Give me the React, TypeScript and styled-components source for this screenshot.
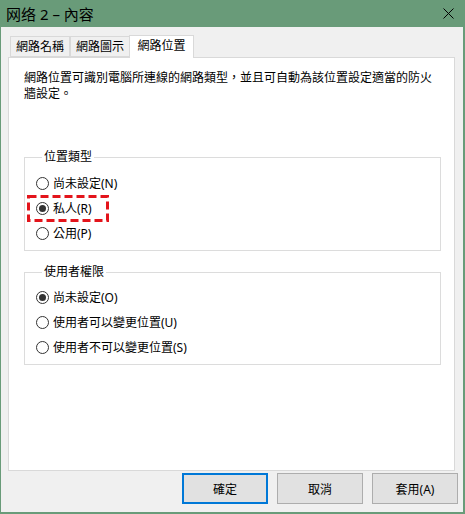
import React from "react";
import styled, { createGlobalStyle } from "styled-components";

const GREEN = "#699b79";

const GlobalStyle = createGlobalStyle`
  html, body {
    margin: 0;
    padding: 0;
    background: #ffffff;
  }
  body {
    font-family: "Noto Sans", "Noto Sans CJK TC", sans-serif;
    font-size: 12px;
    color: #000;
  }
  * {
    box-sizing: border-box;
  }
`;

const Window = styled.div`
  width: 465px;
  height: 514px;
  display: flex;
  flex-direction: column;
  border-left: 1px solid ${GREEN};
  border-right: 2px solid ${GREEN};
  border-bottom: 2px solid ${GREEN};
  background: #f0f0f0;
`;

const TitleBar = styled.div`
  height: 27px;
  flex: none;
  margin-left: -1px;
  margin-right: -2px;
  background: ${GREEN};
  display: flex;
  align-items: center;
  justify-content: space-between;
  padding: 0 11px 0 6px;
`;

const TitleText = styled.span`
  font-family: "Noto Sans", "Noto Sans CJK SC", sans-serif;
  font-size: 15px;
  line-height: 20px;
  color: #000;
`;

const Body = styled.div`
  flex: 1;
  display: flex;
  flex-direction: column;
  padding: 8px 8px 0 7px;
`;

const TabStrip = styled.div`
  display: flex;
  align-items: flex-end;
  height: 22px;
  padding-left: 2px;
  position: relative;
  z-index: 1;
`;

const Tab = styled.div<{ $active?: boolean; $width: number }>`
  width: ${(p) => p.$width}px;
  height: ${(p) => (p.$active ? 23 : 21)}px;
  margin-left: ${(p) => (p.$active ? -1 : 0)}px;
  margin-bottom: ${(p) => (p.$active ? -1 : 0)}px;
  background: ${(p) => (p.$active ? "#ffffff" : "#f0f0f0")};
  border: 1px solid #d9d9d9;
  border-bottom: ${(p) => (p.$active ? "none" : "1px solid #d9d9d9")};
  & + & {
    border-left: ${(p) => (p.$active ? "1px solid #d9d9d9" : "none")};
  }
  display: flex;
  align-items: center;
  justify-content: center;
  padding-bottom: ${(p) => (p.$active ? 3 : 0)}px;
  font-size: 12px;
  line-height: 16px;
`;

const Page = styled.div`
  height: 414px;
  flex: none;
  background: #ffffff;
  border: 1px solid #d9d9d9;
  padding: 12px 15px 0 15px;
`;

const Description = styled.p`
  margin: 0;
  width: 416px;
  line-height: 16px;
  font-size: 12px;
`;

const Group = styled.fieldset<{ $gap: number; $top: number }>`
  margin: ${(p) => p.$gap}px 0 0 0;
  width: 417px;
  border: 1px solid #dcdcdc;
  padding: ${(p) => p.$top}px 11px 4px 11px;
  min-width: 0;
`;

const Legend = styled.legend`
  padding: 0 2px;
  margin-left: 6px;
  line-height: 16px;
  font-size: 12px;
`;

const RadioRow = styled.div`
  position: relative;
  height: 25px;
  display: flex;
  align-items: center;
  gap: 4px;
  line-height: 16px;
`;

const RadioCircle = styled.span<{ $checked?: boolean }>`
  width: 13px;
  height: 13px;
  flex: none;
  border-radius: 50%;
  border: 1px solid #333333;
  background: #ffffff;
  display: flex;
  align-items: center;
  justify-content: center;
  &::after {
    content: "";
    width: 7px;
    height: 7px;
    border-radius: 50%;
    background: ${(p) => (p.$checked ? "#333333" : "transparent")};
  }
`;

const Highlight = styled.svg`
  position: absolute;
  left: -9px;
  top: -1px;
  overflow: visible;
  pointer-events: none;
`;

const ButtonRow = styled.div`
  display: flex;
  justify-content: flex-end;
  gap: 9px;
  margin: 2px -3px 0 0;
`;

const Button = styled.button<{ $primary?: boolean }>`
  width: 86px;
  height: 31px;
  background: #e1e1e1;
  border: ${(p) => (p.$primary ? "2px solid #0078d7" : "1px solid #adadad")};
  font-family: "Noto Sans", "Noto Sans CJK TC", sans-serif;
  font-size: 12px;
  color: #000;
  padding: 0;
`;

function Radio({
  label,
  checked,
  marked,
}: {
  label: string;
  checked?: boolean;
  marked?: boolean;
}) {
  return (
    <RadioRow>
      <RadioCircle $checked={checked} />
      <span>{label}</span>
      {marked && (
        <Highlight width="82" height="28">
          <rect
            x="1.5"
            y="1.5"
            width="79"
            height="24"
            fill="none"
            stroke="#e3141b"
            strokeWidth="3"
            strokeDasharray="8 4"
          />
        </Highlight>
      )}
    </RadioRow>
  );
}

export default function App() {
  return (
    <>
      <GlobalStyle />
      <Window>
        <TitleBar>
          <TitleText>网络 2 – 內容</TitleText>
          <svg width="11" height="11" viewBox="0 0 11 11">
            <path d="M0.5 0.5 L10.5 10.5 M10.5 0.5 L0.5 10.5" stroke="#000" strokeWidth="1" />
          </svg>
        </TitleBar>
        <Body>
          <TabStrip>
            <Tab $width={60}>網路名稱</Tab>
            <Tab $width={60}>網路圖示</Tab>
            <Tab $width={65} $active>
              網路位置
            </Tab>
          </TabStrip>
          <Page>
            <Description>
              網路位置可識別電腦所連線的網路類型，並且可自動為該位置設定適當的防火牆設定。
            </Description>
            <Group $gap={47} $top={6}>
              <Legend>位置類型</Legend>
              <Radio label="尚未設定(N)" />
              <Radio label="私人(R)" checked marked />
              <Radio label="公用(P)" />
            </Group>
            <Group $gap={13} $top={5}>
              <Legend>使用者權限</Legend>
              <Radio label="尚未設定(O)" checked />
              <Radio label="使用者可以變更位置(U)" />
              <Radio label="使用者不可以變更位置(S)" />
            </Group>
          </Page>
          <ButtonRow>
            <Button $primary>確定</Button>
            <Button>取消</Button>
            <Button>套用(A)</Button>
          </ButtonRow>
        </Body>
      </Window>
    </>
  );
}
